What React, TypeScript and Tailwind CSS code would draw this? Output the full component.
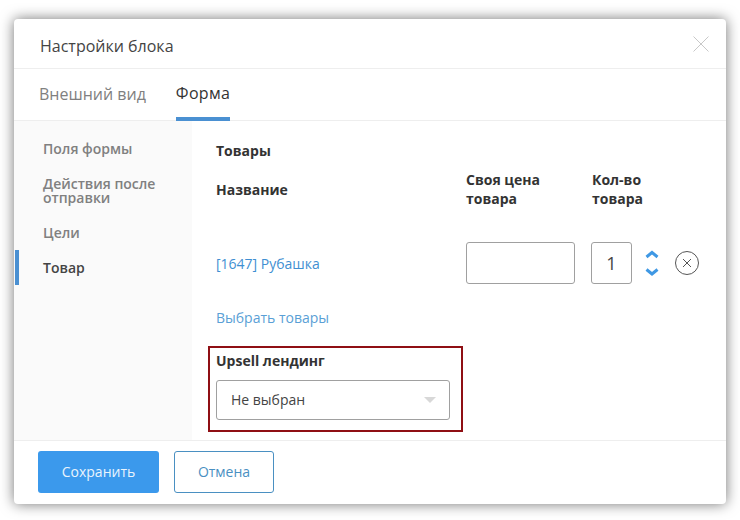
const FONT = "font-['Open_Sans','Noto_Sans',sans-serif]";

function SideItem({ label, active }: { label: string; active?: boolean }) {
  return (
    <div
      className={
        active
          ? 'border-l-4 border-[#4a90d2] py-[10.5px] pl-6 text-[14px] leading-[14px] font-semibold text-[#444444]'
          : 'py-[10.5px] pl-7 text-[14px] leading-[14px] font-semibold text-[#808080]'
      }
    >
      {label}
    </div>
  );
}

export default function App() {
  return (
    <div className={`${FONT} h-[520px] w-[740px] bg-white pt-[19px] pl-[14px]`}>
      <div className="flex h-[485px] w-[712px] flex-col rounded-[4px] bg-white shadow-[0_0_14px_rgba(0,0,0,0.55)]">
        <div className="flex h-[50px] shrink-0 items-center justify-between border-b border-[#eeeeee] pr-[17px] pl-[26px]">
          <span className="pt-[5px] text-[16px] text-[#444444]">Настройки блока</span>
          <svg className="h-[16px] w-[16px]" viewBox="0 0 16 16" fill="none">
            <path d="m.5.5 15 15M15.5.5l-15 15" stroke="#c8c8c8" />
          </svg>
        </div>

        <div className="flex h-[52px] shrink-0 gap-[30px] border-b border-[#eeeeee] pl-[25px]">
          <div className="flex items-center pb-[2px] text-[16px] text-[#808080]">Внешний вид</div>
          <div className="-mb-px flex items-center border-b-4 border-[#4a90d2] text-[16px] font-medium tracking-[0.3px] text-[#333333]">
            Форма
          </div>
        </div>

        <div className="flex min-h-0 flex-1">
          <div className="w-[178px] shrink-0 bg-[#fafafa] pt-[10px] pl-px">
            <SideItem label="Поля формы" />
            <SideItem label="Действия после отправки" />
            <SideItem label="Цели" />
            <SideItem label="Товар" active />
          </div>

          <div className="flex-1 pl-6">
            <div className="pt-[20px] text-[14px] leading-[20px] font-bold text-[#333333]">Товары</div>

            <div className="flex h-[71px] pt-[9px] text-[14px] leading-[19px] font-bold text-[#333333]">
              <div className="w-[250px] pt-[10px]">Название</div>
              <div className="w-[126px]">
                Своя цена
                <br />
                товара
              </div>
              <div>
                Кол-во
                <br />
                товара
              </div>
            </div>

            <div className="mt-[10px] flex h-[42px] items-center">
              <a className="w-[250px] text-[14px] text-[#3f8fd2]">[1647] Рубашка</a>
              <div className="h-[42px] w-[109px] rounded-[3px] border border-[#a0a0a0]" />
              <div className="ml-[16px] flex h-[42px] w-[41px] items-center justify-center rounded-[3px] border border-[#a0a0a0] text-[18px] text-[#444444]">
                1
              </div>
              <svg className="ml-[13px] h-[28px] w-[14px]" viewBox="0 0 14 28" fill="none">
                <path d="M1.5 8 7 3.5 12.5 8" stroke="#3f98e4" strokeWidth="3" />
                <path d="M1.5 20.5 7 25l5.5-4.5" stroke="#3f98e4" strokeWidth="3" />
              </svg>
              <svg className="ml-[16px] h-[24px] w-[24px]" viewBox="0 0 24 24" fill="none">
                <circle cx="12" cy="12" r="11.5" stroke="#555555" />
                <path d="m8 8 8 8M16 8l-8 8" stroke="#555555" />
              </svg>
            </div>

            <a className="mt-[24px] block text-[14px] leading-[20px] text-[#5a9fd6]">Выбрать товары</a>

            <div className="mt-[18px] -ml-[8px] h-[86px] w-[255px] border-2 border-[#8f0f14] px-[6px] pt-[3px]">
              <div className="text-[14px] leading-[20px] font-bold text-[#333333]">Upsell лендинг</div>
              <div className="mt-[9px] flex h-[40px] w-[234px] items-center justify-between rounded-[3px] border border-[#a0a0a0] pr-[13px] pl-[14px] pb-px text-[14px] text-[#444444]">
                <span>Не выбран</span>
                <span className="h-0 w-0 border-x-[6px] border-t-[6px] border-x-transparent border-t-[#d8d8d8]" />
              </div>
            </div>
          </div>
        </div>

        <div className="flex h-[64px] shrink-0 gap-[15px] border-t border-[#eeeeee] pt-[10px] pl-[24px]">
          <button className="h-[42px] w-[121px] rounded-[3px] bg-[#3b99ec] pb-[2px] text-[14px] font-medium text-[#e9f4fd]">
            Сохранить
          </button>
          <button className="h-[42px] w-[100px] rounded-[3px] border border-[#4a90c2] pb-[2px] text-[14px] text-[#4a90c2]">
            Отмена
          </button>
        </div>
      </div>
    </div>
  );
}
